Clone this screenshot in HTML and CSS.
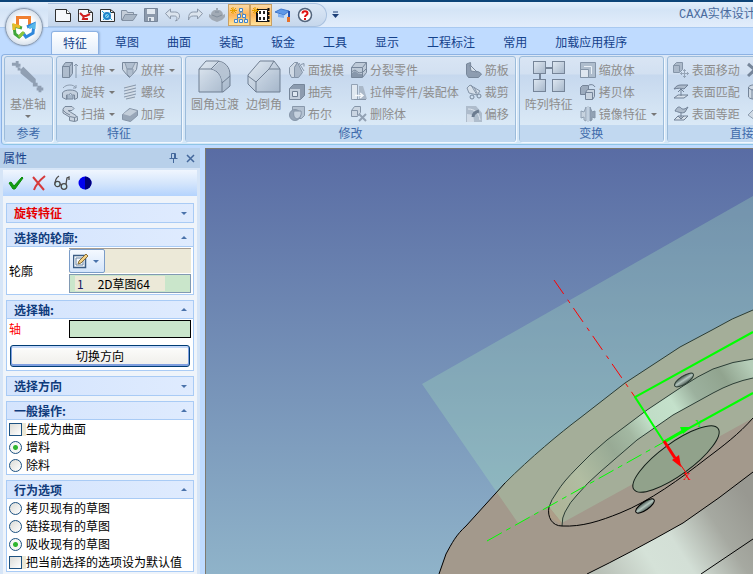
FILE: index.html
```html
<!DOCTYPE html>
<html lang="zh-CN">
<head>
  <meta charset="UTF-8">
  <meta name="viewport" content="width=device-width, initial-scale=1">
  <title>CAXA实体设计</title>
  <link rel="stylesheet" href="styles.css">
</head>
<body>
  <svg class="defs" width="0" height="0" aria-hidden="true">
    <defs>
      <linearGradient id="metal" x1="0" y1="0" x2="1" y2="1">
        <stop offset="0" stop-color="#e3ebf3"/><stop offset="1" stop-color="#9fb0c4"/>
      </linearGradient>
    </defs>
  </svg>

  <header class="titlebar">
    <button class="app-btn" aria-label="菜单">
      <svg width="28" height="28" viewBox="0 0 28 28" fill="none" stroke-width="3">
        <path d="M9 12H7.500V4.500h12V12H18" stroke="#f08030"/>
        <path d="M12 15l-8-2 1 8 4 3 4-4" stroke="#3fa63c"/>
        <path d="M4 17v-5l6 2" stroke="#e8bd28"/>
        <path d="M17 14l7-3-1 9-7 4-3-4" stroke="#2f88dc"/>
        <path d="M19 15l5-3v4" stroke="#58b8e8"/>
        <path d="M9 24l5-5" stroke="#8cc63c"/>
      </svg>
    </button>
    <div class="quick">
      <button aria-label="新建"><svg width="18" height="16" viewBox="0 0 18 16"><path d="M1.500 2.500h11l4 4v8h-15z" fill="#f6f8fb" stroke="#303030"/><path d="M12.500 2.500v4h4" fill="#fff" stroke="#303030"/></svg></button>
      <button aria-label="新建设计"><svg width="18" height="16" viewBox="0 0 18 16"><path d="M2.500 2.500h10l4 3v9h-14z" fill="#f6f8fb" stroke="#303030"/><path d="M12.500 2.500v3h4" fill="none" stroke="#303030"/><path d="M4 6l3 3h3l4-2M8 9l-1 3h5" stroke="#d02020" stroke-width="2" fill="none"/></svg></button>
      <button aria-label="新建图纸"><svg width="18" height="16" viewBox="0 0 18 16"><path d="M2.500 2.500h10l4 3v9h-14z" fill="#f6f8fb" stroke="#303030"/><path d="M12.500 2.500v3h4" fill="none" stroke="#303030"/><circle cx="9" cy="9" r="3" fill="#8ce" stroke="#2080c8" stroke-width="2"/><path d="M4 4l3 3M12 11l2 2M13 5l-8 8" stroke="#18a0d8" stroke-width="1"/></svg></button>
      <button aria-label="打开"><svg width="18" height="16" viewBox="0 0 18 16"><path d="M1.500 13V3.500h5l1 2h6V8" fill="#c5ced9" stroke="#8391a3"/><path d="M2 13.500l3-6h12l-4 6z" fill="#aab7c6" stroke="#8391a3"/></svg></button>
      <button aria-label="保存"><svg width="18" height="16" viewBox="0 0 18 16"><path d="M2.500 1.500h13v13h-13z" fill="#8c99ab" stroke="#77869a"/><path d="M5 2h8v5H5zM6 10h6v4H6z" fill="#e1e8f0"/><path d="M7 11h2v3H7z" fill="#8391a3"/></svg></button>
      <button aria-label="撤销"><svg width="18" height="16" viewBox="0 0 18 16"><path d="M1.500 6.500l5-4.500v3h4c4 0 5 2 5 4s-1 4-4 5c2-2 2-5-1-5h-4v3z" fill="#dbe4ee" stroke="#8b98aa"/></svg></button>
      <button aria-label="重做"><svg width="18" height="16" viewBox="0 0 18 16"><path d="M16.500 6.500l-5-4.500v3h-4c-4 0-5 3-5 8 1-3 2-4 5-4h4v3z" fill="#dbe4ee" stroke="#8b98aa"/></svg></button>
      <button aria-label="渲染"><svg width="18" height="16" viewBox="0 0 18 16"><path d="M8 1h2v2c3 0 5 2 5 5l2-1v3l-3 3-5 2-5-2-3-3V7l2 1c0-3 2-5 5-5z" fill="#a1aab5"/><path d="M4 8l5 2 5-2M7 5h4" stroke="#828e9c" fill="none"/></svg></button>
      <button class="on" aria-label="设计树"><svg width="20" height="18" viewBox="0 0 20 18"><path d="M4 1v7M1 4.500h7M2 2l5 5M7 2L2 7" stroke="#e5a000"/><path d="M12 5l-2 4-2 5M12 5l3 4 2 5" stroke="#4385c8" fill="none"/><g fill="#e8f4ff" stroke="#4385c8"><path d="M10.500 2.500h3v3h-3zM8.500 8.500h3v3h-3zM13.500 8.500h3v3h-3zM5.500 13.500h3v3h-3zM10.500 13.500h3v3h-3zM15.500 13.500h3v3h-3z"/></g></svg></button>
      <button class="on" aria-label="设计元素库"><svg width="20" height="18" viewBox="0 0 20 18"><path d="M5.500 3.500h11v12h-11z" fill="#fff" stroke="#151515"/><path d="M9 5v3M13 5v3M9 11v3M13 11v3" stroke="#222" stroke-width="2"/><path d="M17.500 2v14" stroke="#111" stroke-width="2" stroke-dasharray="3 1"/><path d="M6 4v12" stroke="#111" stroke-width="2"/><path d="M4 1v7M1 4.500h7M2 2l5 5M7 2L2 7" stroke="#e5a000"/></svg></button>
      <button aria-label="教程"><svg width="18" height="16" viewBox="0 0 18 16"><path d="M1 5l6-3 8 2-5 4z" fill="#5f98e8" stroke="#3e76cc"/><path d="M4 7v3l6 1V8" fill="#7fb0f2"/><path d="M15 4v6" stroke="#2450b0" stroke-width="2"/><path d="M13 10h3v5h-3z" fill="#e87028"/></svg></button>
      <button aria-label="帮助"><svg width="18" height="16" viewBox="0 0 18 16"><circle cx="9" cy="8" r="6.500" fill="#fff" stroke="#52647c" stroke-width="1.500"/><path d="M6.500 6.500c0-3 5-3 5 0 0 1.500-2.500 1.500-2.500 3.500M9 11v2" stroke="#e01010" stroke-width="2" fill="none"/></svg></button>
    </div>
    <button class="quick-more" aria-label="自定义"><svg width="7" height="8" viewBox="0 0 7 8"><path d="M1 1h5" stroke="#1c3f78"/><path d="M0 3h7L3.500 7z" fill="#1c3f78"/></svg></button>
    <h1>CAXA实体设计</h1>
  </header>

  <nav class="tabs" role="tablist">
    <button role="tab" class="active" aria-selected="true">特征</button>
    <button role="tab">草图</button>
    <button role="tab">曲面</button>
    <button role="tab">装配</button>
    <button role="tab">钣金</button>
    <button role="tab">工具</button>
    <button role="tab">显示</button>
    <button role="tab">工程标注</button>
    <button role="tab">常用</button>
    <button role="tab">加载应用程序</button>
  </nav>

  <div class="ribbon">
    <section class="group">
      <div class="tools">
        <button class="big"><svg width="34" height="34" viewBox="0 0 34 34" fill="#8695a9"><path d="M1 3h4v-2h3v3h2v3h-2v1H5V6H1zM7 8h3v3H7zM10 10l3-3 13 13v4h-4L10 14zM23 24h5v4h-5zM28 27h4v2h2v3h-2v2h-3v-2h-2v-3h1z" transform="scale(.95)"/></svg>
          <span>基准轴</span><i class="drop"></i></button>
      </div>
      <h2>参考</h2>
    </section>

    <section class="group">
      <div class="tools">
        <div class="col">
          <button><svg width="16" height="16" viewBox="0 0 16 16"><path d="M.5 4.500l3-4h7v11l-3 4h-7z" fill="#a8b6c7" stroke="#68788c"/><path d="M.5 4.500h7v11M7.500 4.500l3-4" fill="none" stroke="#68788c"/><path d="M14 16V2M12 4l2-2 2 2" stroke="#7d8ea2" fill="none"/></svg>拉伸<i class="drop"></i></button>
          <button><svg width="16" height="16" viewBox="0 0 16 16"><path d="M1 4c3-4 11-4 13 0M14 1v3h-3" fill="none" stroke="#8392a5"/><path d="M.5 9c1-4 14-4 15 0v5l-3 1.500V11h-2l-2-1.500-2 1.500h-2v4.500l-4-2z" fill="#c3cedb" stroke="#68788c"/><path d="M5 11v4h6v-4" fill="#9fafc2" stroke="#68788c"/></svg>旋转<i class="drop"></i></button>
          <button><svg width="16" height="16" viewBox="0 0 16 16"><path d="M3 .5h7l2 2-2 2H6l8 5 1.500 2v3l-3 1-5-1V11L1 7V3z" fill="#c7d1dd" stroke="#68788c"/><path d="M7.500 10.500l5 1v4M12.500 11.500l3-1M1 4l3 3 4 2" fill="none" stroke="#68788c"/></svg>扫描<i class="drop"></i></button>
        </div>
        <div class="col">
          <button><svg width="16" height="16" viewBox="0 0 16 16"><path d="M.5.5h15l-1 7-4 5-3 3-3-3-4-5z" fill="#c7d1dd" stroke="#68788c"/><path d="M3 1l2 6 5 0 3-6M5 7v5l3 3 3-3V7z" fill="#aab8c9" stroke="#8190a3"/></svg>放样<i class="drop"></i></button>
          <button><svg width="16" height="16" viewBox="0 0 16 16" stroke="#7b8b9f" fill="#d5dee8"><path d="M3.500 1.500h9v14h-9z" stroke="none"/><path d="M2 4l12-3M2 7l12-3M2 10l12-3M2 13l12-3M4 15l9-2"/></svg>螺纹</button>
          <button><svg width="16" height="16" viewBox="0 0 16 16"><path d="M.5 8.500l7-6 8 2v5l-7 6-8-2z" fill="#8e9cae" stroke="#77869a"/><path d="M1 8l7-5 7 2-7 5z" fill="#c0cad6"/></svg>加厚</button>
        </div>
      </div>
      <h2>特征</h2>
    </section>

    <section class="group">
      <div class="tools">
        <button class="big"><svg width="34" height="34" viewBox="0 0 34 34" stroke="#5f6e82" fill="url(#metal)"><path d="M1 32V9l7-8h12c7 1 12 6 12 14v11l-7 6z"/><path d="M1 9h12c6 1 11 7 11 14v9M13 9l8-8M24 23l8-7" fill="none"/><path d="M14 9l8-7c5 1 9 6 9 12l-7 7c-1-6-4-11-10-12z" fill="#b3c0cf" stroke="none"/></svg><span>圆角过渡</span></button>
        <button class="big"><svg width="34" height="34" viewBox="0 0 34 34" stroke="#5f6e82" fill="url(#metal)"><path d="M1 15L13 1h14l6 8v23H9l-8-8z"/><path d="M1 16l8 6L22 9h11M9 22v10M22 9l5-8" fill="none"/></svg><span>边倒角</span></button>
        <div class="col">
          <button><svg width="16" height="16" viewBox="0 0 16 16"><path d="M.5 5.500l5-5h3l-3 5v10h-3l-2-4z" fill="#d0d9e3" stroke="#78889c"/><path d="M5.500 5.500l3-5 5 10-4 5h-4z" fill="#a3b1c2" stroke="#78889c"/><path d="M10 1l5 8M12 2.500l3-1v3" fill="none" stroke="#78889c"/></svg>面拔模</button>
          <button><svg width="16" height="16" viewBox="0 0 16 16"><path d="M.5 4.500l4-4h11v11l-4 4h-11z" fill="#8190a4" stroke="#68788c"/><path d="M1 5h10v10H1z" fill="#c1ccd9"/><path d="M3.500 7.500h5v5h-5z" fill="#e2e9f1" stroke="#5f6e82"/></svg>抽壳</button>
          <button><svg width="16" height="16" viewBox="0 0 16 16"><path d="M3.500.5h12v9l-3 3h-9z" fill="#aebccc" stroke="#7b8b9f"/><circle cx="6" cy="9" r="5.500" fill="#8c9bae" stroke="#78889c"/><path d="M5 5h7c1 4-1 7-4 8-3-1-4-4-3-8z" fill="#c3cedb" stroke="#78889c"/></svg>布尔</button>
        </div>
        <div class="col">
          <button><svg width="16" height="16" viewBox="0 0 16 16"><path d="M.5 5.500l4-5h11v10l-4 5h-11z" fill="#bac6d4" stroke="#68788c"/><path d="M.5 5.500h11l4-5M11.500 6v9M0 10l4-2 4 3 4-1 4-4" fill="none" stroke="#68788c"/><path d="M1 11l3-2 4 3h3v3H1z" fill="#7b8b9f"/></svg>分裂零件</button>
          <button><svg width="16" height="16" viewBox="0 0 16 16"><path d="M.5.500h6v15h-6z" fill="#e4ebf2" stroke="#8a99ab"/><path d="M8 2h4l4 13H8z" fill="#a5b2c2"/><path d="M4 11.500h7M9 9l3 2.500L9 14" stroke="#fff" stroke-width="1.500" fill="none"/><path d="M3 15.500h12" stroke="#78889c"/></svg>拉伸零件/装配体</button>
          <button><svg width="16" height="16" viewBox="0 0 16 16"><path d="M.5 4.500l3-4h6v6l-3 4h-6z" fill="#c9d3df" stroke="#78889c"/><path d="M.5 4.500h6v5" fill="none" stroke="#78889c"/><path d="M8 8l7 7M15 8l-7 7" stroke="#8897aa" stroke-width="2"/></svg>删除体</button>
        </div>
        <div class="col">
          <button><svg width="16" height="16" viewBox="0 0 16 16"><path d="M.5 2l4-1.500L5 8l8 2 2.500 2-3 3.500h-10l-2-3z" fill="#8392a6" stroke="#68788c"/><path d="M4 3l7 7-6-1z" fill="#dce5ee" stroke="#68788c"/></svg>筋板</button>
          <button><svg width="16" height="16" viewBox="0 0 16 16"><path d="M1 4l3-3 10 6-3 4-8-2z" fill="#d7e0ea" stroke="#78889c"/><path d="M5 1l6 10M8 3l3 6" stroke="#78889c"/><circle cx="6" cy="13" r="2" fill="none" stroke="#68788c"/><circle cx="13" cy="12" r="2" fill="none" stroke="#68788c"/></svg>裁剪</button>
          <button><svg width="16" height="16" viewBox="0 0 16 16"><path d="M0 0h10l6 7v9H0z" fill="#a8b6c6"/><path d="M1 8c6 0 7 3 7 8H1z" fill="#d1dbe6"/><path d="M2 3c7 0 11 4 12 11" stroke="#e1e8f0" fill="none"/><path d="M7 11c0-3 2-5 6-6" stroke="#59697e" stroke-width="3" fill="none"/></svg>偏移</button>
        </div>
      </div>
      <h2>修改</h2>
    </section>

    <section class="group">
      <div class="tools">
        <button class="big"><svg width="34" height="34" viewBox="0 0 34 34" stroke="#667589" fill="url(#metal)"><path d="M13 8h8M8 13v8" stroke-width="2"/><rect x="1.500" y="1.500" width="12" height="12"/><rect x="20.500" y="1.500" width="12" height="12"/><rect x="1.500" y="19.500" width="12" height="12"/><rect x="20.500" y="19.500" width="12" height="12"/></svg><span>阵列特征</span></button>
        <div class="col">
          <button><svg width="16" height="16" viewBox="0 0 16 16"><path d="M.5.500h15v15h-15z" fill="#a9b7c7" stroke="#77879b"/><path d="M.5 7.500h8v8h-8z" fill="#e1e8f0" stroke="#77879b"/><path d="M4 4.500h7.500V12" stroke="#eef3f8" fill="none"/></svg>缩放体</button>
          <button><svg width="16" height="16" viewBox="0 0 16 16" stroke="#66758a"><path d="M.5 3.500l2-2h6v7l-2 2h-6z" fill="#94a3b6"/><path d="M5.500 8.500l2-3h7v7l-2 3h-7z" fill="#c8d2de"/><path d="M5.500 8.500h7v7M9 1c3-1 5 0 6 2" fill="none"/></svg>拷贝体</button>
          <button><svg width="16" height="16" viewBox="0 0 16 16"><path d="M6 1v14l-2-1v-3l-3 1V5l3 1z" fill="#c5d0dc" stroke="#8494a7"/><path d="M10 1v14l2-1v-3l3 1V5l-3 1z" fill="#8797aa" stroke="#78889c"/><path d="M8 0v16" stroke="#a8b5c4"/></svg>镜像特征<i class="drop"></i></button>
        </div>
      </div>
      <h2>变换</h2>
    </section>

    <section class="group wide">
      <div class="tools">
        <div class="col">
          <button><svg width="16" height="16" viewBox="0 0 16 16"><path d="M.5 3.500l3-3h6v7l-3 3h-6z" fill="#a5b3c4" stroke="#78889c"/><path d="M.5 3.500h6v6" fill="none" stroke="#78889c"/><path d="M11.500 7v9M7 11.500h9M10 8.500h3M10 14.500h3M8.500 10v3M14.500 10v3" stroke="#8c9bad"/></svg>表面移动</button>
          <button><svg width="16" height="16" viewBox="0 0 16 16" stroke="#607086"><path d="M1 5c2-3 4-4 7-4h7l-4 4c-3-1-6-1-10 0z" fill="#a7b5c5"/><path d="M1 14l4-3h10l-4 3z" fill="#d7e0e9"/><path d="M8 5v7M5 8l3-3 3 3" fill="none"/></svg>表面匹配</button>
          <button><svg width="16" height="16" viewBox="0 0 16 16" stroke="#607086"><path d="M2 5c2-4 4-5 6-3s4 1 7-1l-3 5c-3 2-6 0-10-1z" fill="#a7b5c5"/><path d="M1 14l4-4h10l-4 4z" fill="#d7e0e9"/><path d="M8 6v6M5 10l3 3 3-3" fill="none"/></svg>表面等距</button>
        </div>
        <div class="col">
          <button aria-label="删除表面"><svg width="16" height="16" viewBox="0 0 16 16"><path d="M1 2l14 12M1 14L14 2" stroke="#66768b" stroke-width="3"/></svg></button>
          <button aria-label="编辑半径"><svg width="16" height="16" viewBox="0 0 16 16"><path d="M1.500 3c2-3 11-3 13 0v10c-2 3-11 3-13 0z" fill="#cdd7e2" stroke="#66768b"/><path d="M2 4c2 3 10 3 12 0M5 5v10" stroke="#66768b" fill="none"/></svg></button>
          <button aria-label="分割表面"><svg width="16" height="16" viewBox="0 0 16 16"><path d="M1 9l7-7 7 4-7 8z" fill="#cdd7e2" stroke="#8292a5"/></svg></button>
        </div>
      </div>
      <h2>直接</h2>
    </section>
  </div>

  <main class="work">
    <aside class="dock">
      <div class="dock-title">
        <h2>属性</h2>
        <button aria-label="自动隐藏"><svg width="9" height="10" viewBox="0 0 9 10" fill="none" stroke="#44689c"><path d="M2.500.5h4v5M2.500.500v5M.5 5.500h8M4.500 6v4M5.500 1v4"/></svg></button>
        <button aria-label="关闭"><svg width="9" height="9" viewBox="0 0 9 9" stroke="#44689c" stroke-width="1.500"><path d="M1 1l7 7M8 1L1 8"/></svg></button>
      </div>
      <div class="dock-body">
        <div class="actions">
          <button aria-label="确定"><svg width="16" height="16" viewBox="0 0 16 16"><path d="M1 8l2-1 3 4 8-9 1 1-8 11H5z" fill="#12a012" stroke="#0b8a0b"/></svg></button>
          <button aria-label="取消"><svg width="16" height="16" viewBox="0 0 16 16" fill="none" stroke="#d63a3a" stroke-width="2"><path d="M2 2l11 13M14 1C9 5 5 9 3 15"/></svg></button>
          <button aria-label="预览"><svg width="16" height="16" viewBox="0 0 16 16" fill="#cdeaf8" stroke="#4a4a4a" stroke-width="1.300"><path d="M1 10C1 5 3 2 5 1M12 9l1-6 2-1v3" fill="none"/><circle cx="3.500" cy="9" r="2.600"/><circle cx="10" cy="11.500" r="2.800"/><path d="M6 9l2 1" /></svg></button>
          <button aria-label="应用"><svg width="16" height="16" viewBox="0 0 16 16"><circle cx="8" cy="8" r="6.500" fill="#0000f0"/><path d="M8 1.500a6.500 6.500 0 0 1 0 13z" fill="#000078"/></svg></button>
        </div>

        <div class="panels">
          <section class="panel">
            <button class="head red">旋转特征<i class="down"></i></button>
          </section>
          <section class="panel">
            <button class="head">选择的轮廓:<i class="up"></i></button>
            <div class="profile">
              <span>轮廓</span>
              <div class="picker">
                <div class="picker-bar">
                  <button aria-label="选择草图"><svg width="16" height="16" viewBox="0 0 16 16"><path d="M.5 2.500h12v12H.500z" fill="#f4f7fa" stroke="#3b5d85" stroke-width="1.500"/><path d="M3 12V5h6M3 12h7V8" fill="none" stroke="#6b86a6"/><path d="M5 11l1-3 7-7 2 2-7 7z" fill="#f3d28a" stroke="#8a7038"/></svg><i class="down"></i></button>
                </div>
                <div class="picked"><p><b>1</b><span>2D草图64</span></p></div>
              </div>
            </div>
          </section>
          <section class="panel">
            <button class="head">选择轴:<i class="up"></i></button>
            <div class="axis"><label for="axis">轴</label><input id="axis" type="text"></div>
            <div class="flip"><button>切换方向</button></div>
          </section>
          <section class="panel">
            <button class="head">选择方向<i class="down"></i></button>
          </section>
          <section class="panel">
            <button class="head">一般操作:<i class="up"></i></button>
            <label class="opt"><input type="checkbox">生成为曲面</label>
            <label class="opt"><input type="radio" name="op" checked>增料</label>
            <label class="opt"><input type="radio" name="op">除料</label>
          </section>
          <section class="panel">
            <button class="head">行为选项<i class="up"></i></button>
            <label class="opt"><input type="radio" name="mode">拷贝现有的草图</label>
            <label class="opt"><input type="radio" name="mode">链接现有的草图</label>
            <label class="opt"><input type="radio" name="mode" checked>吸收现有的草图</label>
            <label class="opt"><input type="checkbox">把当前选择的选项设为默认值</label>
          </section>
        </div>
      </div>
    </aside>

    <div class="viewport">
      <svg viewBox="206 149 547 425" preserveAspectRatio="xMinYMin slice">
        <defs>
          <linearGradient id="side" gradientUnits="userSpaceOnUse" x1="610" y1="590" x2="750" y2="500">
            <stop offset="0" stop-color="#b9c0b7"/><stop offset=".3" stop-color="#d5e2d8"/><stop offset=".48" stop-color="#d3dfd6"/><stop offset=".75" stop-color="#a6a9a1"/><stop offset="1" stop-color="#989891"/>
          </linearGradient>
          <linearGradient id="wall" gradientUnits="userSpaceOnUse" x1="555" y1="500" x2="753" y2="370">
            <stop offset="0" stop-color="#aeb599"/><stop offset=".14" stop-color="#b1bda2"/><stop offset=".32" stop-color="#98aa95"/><stop offset=".42" stop-color="#a3b8a2"/><stop offset=".51" stop-color="#c0dcc6"/><stop offset=".64" stop-color="#c4e1cb"/><stop offset=".74" stop-color="#9cb19e"/><stop offset=".88" stop-color="#91a48f"/><stop offset="1" stop-color="#b5cdb8"/>
          </linearGradient>
          <linearGradient id="bolt" x1="0" y1="0" x2="0" y2="1">
            <stop offset="0" stop-color="#40504a"/><stop offset=".5" stop-color="#b4c6be"/><stop offset="1" stop-color="#4d5c56"/>
          </linearGradient>
        </defs>
        <!-- flange -->
        <path d="M439 574L446 554C452 543 456 535 466 526L505 483C530 458 560 433 580 418L625 383L680 347L712 330Q732 318 753 310V574z" fill="#a3998c"/>
        <path d="M587 574Q630 553 683 523Q720 498 753 472V574z" fill="url(#side)"/>
        <!-- sketch plane -->
        <path d="M422 384L753 196V418L562 523L549 506L518 523z" fill="#aae6ba" fill-opacity=".28"/>
        <path d="M753 359Q733 361 713 369Q698 376 683 386L647 410L607 440Q590 454 577 468Q563 482 557 492Q551 500 549 507L562 523Q562 517 565 512Q570 502 577 495Q587 483 600 472L637 440L673 415L713 393Q733 382 753 378z" fill="url(#wall)"/>
        <path d="M549 507V517L562 525V523z" fill="#ad9e88"/>
        <!-- edges -->
        <g fill="none" stroke="#000">
          <path d="M439 574L446 554C452 543 456 535 466 526L505 483" />
          <path d="M505 483C530 458 560 433 580 418L625 383L680 347L712 330Q732 318 753 310" stroke="#2b3d35"/>
          <path d="M753 359Q733 361 713 369Q698 376 683 386L647 410L607 440Q590 454 577 468Q563 482 557 492Q551 500 549 507" stroke="#2b3d35"/>
          <path d="M753 378Q733 382 713 393L673 415L637 440L600 472Q587 483 577 495Q570 502 565 512Q562 517 562 526" stroke="#2b3d35"/>
          <path d="M549 507C547 517 552 526 562 526C582 527 600 521 620 513C650 501 680 479 707 458C723 446 739 434 753 418"/>
          <path d="M587 574Q630 553 683 523Q720 498 753 472M701 574L753 539"/>
        </g>
        <ellipse cx="676" cy="459" rx="52" ry="16" transform="rotate(-36 676 459)" fill="#91a28b" stroke="#101c16"/>
        <ellipse cx="684" cy="380" rx="11" ry="4" transform="rotate(-33 684 380)" fill="url(#bolt)" stroke="#2b3d35"/>
        <ellipse cx="645" cy="506" rx="11" ry="4" transform="rotate(-35 645 506)" fill="url(#bolt)" stroke="#000"/>
        <path d="M554 280L635 397" stroke="#f00" stroke-dasharray="17 7 4 6" fill="none"/>
        <path d="M487 541L664 442" stroke="#0f0" stroke-dasharray="17 5 5 5" fill="none"/>
        <path d="M753 332L635 397L664 442L753 393" stroke="#0f0" stroke-width="2" fill="none"/>
        <path d="M664 442L683 431" stroke="#0f0" stroke-width="3"/>
        <path d="M680 427L691 427L683 434z" fill="#0f0"/>
        <path d="M664 441L675 458" stroke="#f00" stroke-width="3"/>
        <path d="M675 457L687 474" stroke="#f00"/>
        <path d="M672 460L679 455L681 467z" fill="#f00"/>
        <text x="695" y="427" fill="#0f0">Y</text>
        <text x="683" y="480" fill="#f00">X</text>
      </svg>
    </div>
  </main>
</body>
</html>
```
FILE: styles.css
```css
:root {
  --line: #8db2e3;
  --panel-line: #a9cbf5;
  --navy: #15428b;
  --disabled: #8d8d8d;
  --green: #cae6cb;
}
* {
  box-sizing: border-box;
}
body {
  margin: 0;
  height: 100vh;
  display: flex;
  flex-direction: column;
  overflow: hidden;
  background: #bfdbff;
  font: 12px/16px "Noto Sans CJK SC", sans-serif;
}
button {
  margin: 0;
  padding: 0;
  border: 0;
  background: none;
  font: inherit;
  color: inherit;
  white-space: nowrap;
}
h1, h2, p {
  margin: 0;
  font-size: 12px;
  font-weight: normal;
}
svg {
  display: block;
  flex: none;
}
.defs {
  position: absolute;
}

/* title bar */
.titlebar {
  position: relative;
  flex: none;
  display: flex;
  align-items: center;
  height: 28px;
  padding-left: 48px;
  border-top: 2px solid #0c4478;
  border-bottom: 1px solid #a9c9f0;
  background: linear-gradient(#e3effc, #d4e4f6 30%, #e2edfb);
}
.app-btn {
  position: absolute;
  left: 5px;
  top: 6px;
  width: 38px;
  height: 38px;
  display: flex;
  align-items: center;
  justify-content: center;
  border: 1px solid #8b9bb0;
  border-radius: 50%;
  background: radial-gradient(#fff 40%, #d3deea 75%, #aebccd);
  box-shadow: 0 0 2px #8397b3;
}
.quick {
  display: flex;
  align-items: center;
  height: 24px;
  padding: 0 10px 0 4px;
  border: 1px solid #a9c1df;
  border-left: 0;
  border-radius: 0 12px 12px 0;
  background: linear-gradient(#dce8f6, #c6d7ec);
}
.quick button {
  display: flex;
  align-items: center;
  justify-content: center;
  width: 22px;
  height: 22px;
}
.quick .on {
  border: 1px solid #c9a063;
  background: linear-gradient(#fbd9a5, #fdb457 50%, #ffe39c);
}
.quick-more {
  margin-left: 5px;
}
.titlebar h1 {
  position: absolute;
  left: 679px;
  white-space: nowrap;
  color: #4b6c9e;
  font-family: "Liberation Mono", "Noto Sans CJK SC", monospace;
}

/* tabs */
.tabs {
  flex: none;
  display: flex;
  gap: 4px;
  height: 26px;
  padding: 3px 0 0 51px;
}
.tabs button {
  padding: 0 12px 2px;
  color: var(--navy);
}
.tabs .active {
  border: 1px solid var(--line);
  border-bottom: 0;
  border-radius: 3px 3px 0 0;
  padding: 0 11px 1px;
  background: linear-gradient(#fff, #e3eefb);
  box-shadow: 1px 0 2px #9bb8dd;
}

/* ribbon */
.ribbon {
  flex: none;
  display: flex;
  gap: 3px;
  height: 91px;
  margin: 0 0 3px 1px;
  padding: 1px 0 2px 2px;
  border: 1px solid var(--line);
  border-right: 0;
  border-bottom-color: #8fc5e6;
  border-radius: 4px 0 0 4px;
  background: linear-gradient(#dbe7f6, #d5e8f8);
  overflow: hidden;
  color: var(--disabled);
}
.group {
  flex: none;
  border: 1px solid #9cbcdb;
  border-radius: 3px;
  background: linear-gradient(#d9e5f4, #d2e0f1 17px, #c6d8ee 18px, #dae9f6 68px);
  box-shadow: 1px 1px 0 #f2f8fe;
}
.group h2 {
  height: 17px;
  border-radius: 0 0 2px 2px;
  background: #c1d8f0;
  color: #3e6aaa;
  text-align: center;
}
.wide h2 {
  padding-left: 62px;
  text-align: left;
}
.tools {
  display: flex;
  gap: 7px;
  padding: 2px 6px 0 5px;
}
.tools svg {
  opacity: .85;
}
.col button {
  display: flex;
  align-items: center;
  gap: 3px;
  height: 22px;
}
.big {
  display: flex;
  flex-direction: column;
  align-items: center;
  height: 66px;
  padding-top: 1px;
}
.big span {
  margin-top: 2px;
}
.drop, .down, .up {
  border: 3px solid transparent;
  border-bottom: 0;
  border-top-color: #777;
}
.col .drop {
  margin-left: 1px;
}
.big .drop {
  margin-top: 3px;
}

/* properties dock */
.work {
  flex: 1;
  min-height: 0;
  display: flex;
}
.dock {
  flex: none;
  width: 200px;
  display: flex;
  flex-direction: column;
}
.dock-title {
  display: flex;
  align-items: center;
  gap: 8px;
  height: 20px;
  padding: 0 5px 0 3px;
  background: #b8d0ea;
}
.dock-title h2 {
  flex: 1;
  color: var(--navy);
}
.dock-body {
  flex: 1;
  min-height: 0;
  padding: 2px 3px 0;
  background: #d6e5f7;
}
.actions {
  display: flex;
  gap: 7px;
  height: 26px;
  padding: 4px 5px;
  background: linear-gradient(#f0f6fe, #d5e6fc 50%, #b4d3fd);
}
.panels {
  display: flex;
  flex-direction: column;
  gap: 5px;
  height: 100%;
  padding: 7px 3px 0;
  background: #eff4fa;
}
.panel {
  border: 1px solid var(--panel-line);
  background: #fff;
}
.head {
  display: flex;
  align-items: center;
  justify-content: space-between;
  width: 100%;
  height: 18px;
  padding: 0 6px 0 7px;
  background: linear-gradient(90deg, #d4e4fd, #dfebfe);
  color: #0f3b7c;
  font-weight: bold;
}
.head:not(:last-child) {
  border-bottom: 1px solid var(--panel-line);
}
.red {
  color: #e60000;
}
.down {
  border-top-color: #4a73ab;
}
.up {
  border: 3px solid transparent;
  border-top: 0;
  border-bottom-color: #4a73ab;
}
.profile {
  display: flex;
  align-items: center;
  gap: 36px;
  padding: 1px 2px;
}
.picker {
  flex: 1;
}
.picker-bar {
  height: 25px;
  border-top: 1px solid #a79d92;
  background: #ece9d8;
}
.picker-bar button {
  display: flex;
  align-items: center;
  gap: 4px;
  height: 24px;
  padding: 0 5px 0 3px;
  border: 1px solid #7a9cc8;
  border-radius: 2px;
  background: linear-gradient(#f4f9ff, #d3e4fa);
}
.picked {
  height: 19px;
  margin-top: 1px;
  padding: 1px 0 0 5px;
  border: 1px solid #8199b2;
  background: var(--green);
}
.picked p {
  display: flex;
  gap: 14px;
  width: 90px;
  height: 15px;
  padding-left: 2px;
  background: #ece9d8;
  line-height: 15px;
}
.picked b {
  font-weight: normal;
  color: #202060;
}
.axis {
  display: flex;
  align-items: center;
  justify-content: space-between;
  padding: 1px 2px 0;
  color: #f00;
}
.axis input {
  width: 122px;
  height: 18px;
  border: 1px solid #000;
  background: var(--green);
}
.flip {
  padding: 7px 3px 3px;
}
.flip button {
  width: 100%;
  height: 22px;
  border: 1px solid #003c74;
  border-radius: 3px;
  background: linear-gradient(#fdfdfc, #efeeea);
  box-shadow: inset 0 -1px 0 1px #7f9fe0, inset 0 1px 0 1px #c4d8f8;
}
.opt {
  display: flex;
  align-items: center;
  height: 18px;
  padding-left: 2px;
}
.opt input {
  appearance: none;
  width: 13px;
  height: 13px;
  margin: 0 4px 0 0;
  border: 1px solid #1d5281;
  background: linear-gradient(135deg, #dcdcd7, #fff);
  box-shadow: 4px 0 0 #ece9d8;
}
.opt input[type=radio] {
  border-radius: 50%;
  box-shadow: none;
}
.opt input[type=radio]:checked {
  background: radial-gradient(#2fb52f 2px, #f4f6f4 3px);
}

/* 3D scene */
.viewport {
  flex: 1;
  min-width: 0;
  margin-left: 5px;
  border: solid #7d7a70;
  border-width: 1px 0 0 1px;
  background: linear-gradient(#596ca4, #8fb3c9);
  overflow: hidden;
}
.viewport svg {
  width: 100%;
  height: 100%;
}
.viewport text {
  font: 11px "Liberation Serif", serif;
}
```
